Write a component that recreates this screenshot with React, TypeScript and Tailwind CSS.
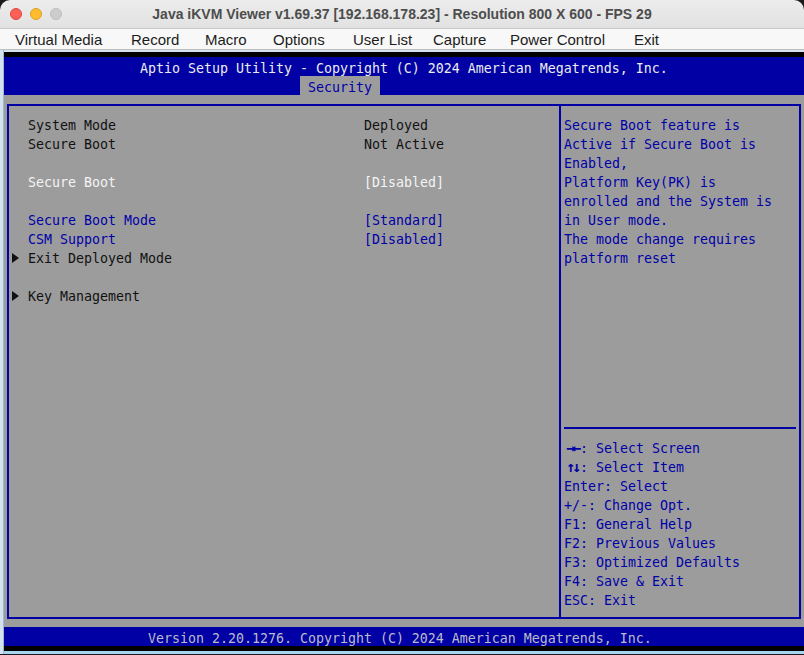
import React from "react";

type Row = { label?: string; value?: string; tone?: "black" | "white" | "blue"; arrow?: boolean };

const rows: Row[] = [
  { label: "System Mode", value: "Deployed", tone: "black" },
  { label: "Secure Boot", value: "Not Active", tone: "black" },
  {},
  { label: "Secure Boot", value: "[Disabled]", tone: "white" },
  {},
  { label: "Secure Boot Mode", value: "[Standard]", tone: "blue" },
  { label: "CSM Support", value: "[Disabled]", tone: "blue" },
  { label: "Exit Deployed Mode", tone: "black", arrow: true },
  {},
  { label: "Key Management", tone: "black", arrow: true },
];

const helpText = [
  "Secure Boot feature is",
  "Active if Secure Boot is",
  "Enabled,",
  "Platform Key(PK) is",
  "enrolled and the System is",
  "in User mode.",
  "The mode change requires",
  "platform reset",
];

const keyHelp: [string, string][] = [
  ["→←", ": Select Screen"],
  ["↑↓", ": Select Item"],
  ["", "Enter: Select"],
  ["", "+/-: Change Opt."],
  ["", "F1: General Help"],
  ["", "F2: Previous Values"],
  ["", "F3: Optimized Defaults"],
  ["", "F4: Save & Exit"],
  ["", "ESC: Exit"],
];

const menu = [
  { name: "Virtual Media", w: "w-[116px]" },
  { name: "Record", w: "w-[74px]" },
  { name: "Macro", w: "w-[68px]" },
  { name: "Options", w: "w-[80px]" },
  { name: "User List", w: "w-[80px]" },
  { name: "Capture", w: "w-[77px]" },
  { name: "Power Control", w: "w-[124px]" },
  { name: "Exit", w: "w-[60px]" },
];

function toneClass(t?: Row["tone"]) {
  if (t === "white") return "text-[#f4f4f4]";
  if (t === "blue") return "text-[#0000a8]";
  return "text-[#111111]";
}

function Arrow() {
  return (
    <svg width="7" height="10" viewBox="0 0 7 10" className="mt-[6px]">
      <polygon points="0,0 7,5 0,10" fill="#111111" />
    </svg>
  );
}

export default function App() {
  return (
    <div className="w-[804px] h-[655px] overflow-hidden bg-[#1a1a1a] font-['Liberation_Sans',sans-serif]">
      {/* mac title bar */}
      <div className="relative h-[29px] rounded-t-[10px] bg-gradient-to-b from-[#ececec] to-[#e2e2e2] border-b border-[#c9c9c9] flex items-center">
        <div className="flex items-center gap-[8px] pl-[10px]">
          <span className="h-[12px] w-[12px] rounded-full bg-[#fe5f57] border border-[#e0443e]" />
          <span className="h-[12px] w-[12px] rounded-full bg-[#febc2e] border border-[#dea123]" />
          <span className="h-[12px] w-[12px] rounded-full bg-[#cdcdcd] border border-[#bdbdbd]" />
        </div>
        <div className="absolute inset-0 flex items-center justify-center text-[14px] font-bold text-[#4d4d4d] pointer-events-none">
          Java iKVM Viewer v1.69.37 [192.168.178.23] - Resolution 800 X 600 - FPS 29
        </div>
      </div>

      {/* menu bar */}
      <div className="h-[21px] bg-[#f8f8f8] border-b border-[#bdbdbd] flex items-center pl-[15px] text-[15px] text-[#1c1c1c]">
        {menu.map((m) => (
          <span key={m.name} className={`${m.w} shrink-0 leading-[21px]`}>
            {m.name}
          </span>
        ))}
      </div>

      {/* viewer area */}
      <div className="flex bg-[#d4e2ef] h-[604px]">
        <div className="w-[4px] shrink-0 border-r border-[#9fb7cf]" />
        <div className="flex flex-col w-[800px] shrink-0">
          <div className="h-[2px] bg-[#d4e2ef]" />
          <div className="h-[5px] bg-black" />

          {/* BIOS screen */}
          <div className="font-['DejaVu_Sans_Mono',monospace] text-[13.29px] leading-[23px] whitespace-pre">
            {/* header */}
            <div className="h-[38px] bg-[#0000a4]">
              <div className="h-[19px] pl-[136px] text-[#ececec]">
                Aptio Setup Utility - Copyright (C) 2024 American Megatrends, Inc.
              </div>
              <div className="h-[19px] pl-[296px]">
                <span className="inline-block align-top h-[19px] overflow-hidden w-[80px] bg-[#9c9c9c] pl-[8px] text-[#0000a4]">Security</span>
              </div>
            </div>

            {/* body */}
            <div className="h-[532px] bg-[#9c9c9c] pt-[9px] pl-[3px]">
              <div className="w-[794px] h-[515px] border-2 border-[#0000a4] flex">
                {/* left panel */}
                <div className="w-[550px] pt-[8px] pl-[3px]">
                  {rows.map((r, i) => (
                    <div key={i} className="h-[19px] flex">
                      <span className="w-[16px] shrink-0 flex">{r.arrow ? <Arrow /> : null}</span>
                      <span className={`w-[336px] shrink-0 ${toneClass(r.tone)}`}>{r.label ?? ""}</span>
                      <span className={toneClass(r.tone)}>{r.value ?? ""}</span>
                    </div>
                  ))}
                </div>
                <div className="w-[2px] bg-[#0000a4]" />
                {/* right panel */}
                <div className="w-[238px] pt-[8px] text-[#0000a8]">
                  <div className="h-[304px] pl-[3px]">
                    {helpText.map((t) => (
                      <div key={t} className="h-[19px]">{t}</div>
                    ))}
                  </div>
                  <div className="h-[19px] flex items-center px-[3px]">
                    <div className="h-[2px] w-full bg-[#0000a4]" />
                  </div>
                  <div className="pl-[3px]">
                    {keyHelp.map(([k, t]) => (
                      <div key={t} className="h-[19px] flex">
                        {k ? (
                          <span className="w-[16px] shrink-0 flex justify-center font-bold text-[15px] tracking-[-3px]">{k}</span>
                        ) : null}
                        <span>{t}</span>
                      </div>
                    ))}
                  </div>
                </div>
              </div>
            </div>

            {/* footer */}
            <div className="h-[19px] bg-[#0000a4] pl-[144px] text-[#bcbcc8]">
              Version 2.20.1276. Copyright (C) 2024 American Megatrends, Inc.
            </div>
          </div>
          <div className="h-[5px] bg-black" />
          <div className="flex-1 bg-[#a9d4f0]" />
        </div>
      </div>
    </div>
  );
}
